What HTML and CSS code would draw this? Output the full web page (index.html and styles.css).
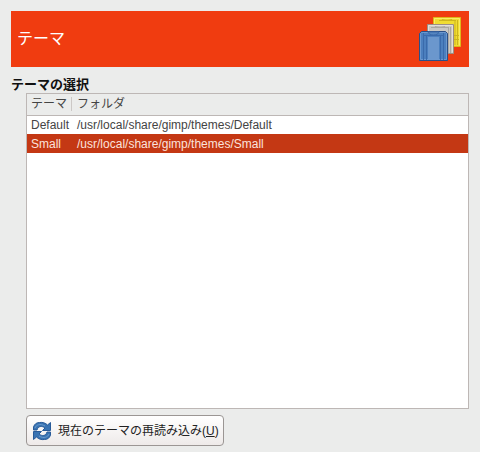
FILE: index.html
```html
<!DOCTYPE html>
<html lang="ja">
<head>
<meta charset="utf-8">
<title>テーマ</title>
<link rel="stylesheet" href="styles.css">
</head>
<body>
<main class="page">
  <header class="banner">
    <h1 class="banner-title">テーマ</h1>
    <svg class="banner-icon" width="44" height="48" viewBox="0 0 44 48" aria-hidden="true">
      <g>
        <path d="M14.500 2.500h27v29h-27z" fill="#f0dc32" stroke="#e0b818"/>
        <path d="M36 5v25M38.500 5v25M20 5.500h17M22 3c1 3 11 3 12 0M35 20.500h6M35 24.500h6" fill="none" stroke="#cdb51c"/>
        <path d="M15.500 30V3.500h25v27" fill="none" stroke="#f8ec68"/>
      </g>
      <g>
        <path d="M8.500 9.500h26v29h-26z" fill="#cbc8c3" stroke="#9c8e86"/>
        <path d="M29.500 12v26M31.500 12v26M12 12.500h17M15 10c1 3 11 3 12 0" fill="none" stroke="#aaa7a1"/>
        <path d="M9.500 37V10.500h24v27" fill="none" stroke="#e2dfda"/>
      </g>
      <g>
        <path d="M.5 18.500l2-2h24l2 2v27H.5z" fill="#4b7fbe" stroke="#2b4f87"/>
        <path d="M9 22h11v23H9z" fill="#6b97cd"/>
        <path d="M1.500 44.500V18.500l1-1h24l1 1v26z" fill="none" stroke="#6c98ce"/>
        <path d="M4.500 18v27M7.500 21v24M21.500 21v24M24.500 18v27M5 20.500h19" fill="none" stroke="#3a6aab"/>
        <path d="M9 17c1 4 10 4 11 0z" fill="#5686c0" stroke="#3a6aab"/>
      </g>
    </svg>
  </header>
  <section class="themes">
    <h2 class="themes-title" id="themes-title">テーマの選択</h2>
    <div class="themes-body">
      <div class="list">
        <table class="theme-table" aria-labelledby="themes-title">
          <thead>
            <tr><th class="name" scope="col"><span class="divided">テーマ</span></th><th scope="col">フォルダ</th></tr>
          </thead>
          <tbody>
            <tr><td>Default</td><td>/usr/local/share/gimp/themes/Default</td></tr>
            <tr class="selected" aria-selected="true"><td>Small</td><td>/usr/local/share/gimp/themes/Small</td></tr>
          </tbody>
        </table>
      </div>
      <button class="reload" type="button" accesskey="u">
        <svg width="20" height="20" viewBox="0 0 20 20" aria-hidden="true">
          <path d="M1.500 9V6c1-3 3-4.500 6-4.500 3-.5 6 .5 8 2.500l3-2.500v8h-8l2.500-2.500C10 4.500 6 5 5 9z" fill="#3973b2" stroke="#285a98"/>
          <path d="M18.500 11v3c-1 3-3 4.500-6 4.500-3 .5-6-.5-8-2.500l-3 2.500v-8h8L7 13c3 2.500 7 2 8-2z" fill="#3973b2" stroke="#285a98"/>
          <path d="M3 7c1-3 5-5 10-2M17 13c-1 3-5 5-10 2" fill="none" stroke="#6b9bcd"/>
        </svg>
        <span>現在のテーマの再読み込み(<u>U</u>)</span>
      </button>
    </div>
  </section>
</main>
</body>
</html>
```
FILE: styles.css
```css
* {
  box-sizing: border-box;
}

body {
  margin: 0;
  background: #ebeceb;
  color: #444;
  font: 12px/18px "Liberation Sans", "Noto Sans CJK JP", sans-serif;
}

.page {
  display: flex;
  flex-direction: column;
  gap: 10px;
  min-height: 100vh;
  padding: 11px 11px 6px;
}

.banner {
  display: flex;
  align-items: center;
  justify-content: space-between;
  padding: 4px 6px;
  background: #f03c10;
  color: #fff;
}

.banner-title {
  margin: 0;
  font-size: 16px;
  line-height: 24px;
  font-weight: 400;
}

.banner-icon {
  display: block;
}

.themes,
.themes-body {
  display: flex;
  flex: 1;
  flex-direction: column;
}

.themes-title {
  margin: 0;
  color: #111;
  font-size: 13px;
  line-height: 16px;
  font-weight: 700;
}

.themes-body {
  gap: 6px;
  padding-left: 15px;
}

.list {
  flex: 1;
  border: 1px solid #bdb7b5;
  background: #fff;
}

.theme-table {
  width: 100%;
  border-collapse: collapse;
}

.theme-table th,
.theme-table td {
  height: 19px;
  padding: 0 4px;
  text-align: left;
  font-weight: 400;
  white-space: nowrap;
}

.theme-table th {
  height: 21px;
  border-bottom: 1px solid #bdb7b5;
  background: #ebeceb;
}

.theme-table .name {
  width: 46px;
  padding-right: 1px;
}

.divided {
  display: block;
  border-right: 1px solid #ccc8c6;
  line-height: 14px;
}

.theme-table .selected td {
  background: #c43814;
  color: #fbe3dc;
}

.reload {
  display: flex;
  align-items: center;
  align-self: flex-start;
  gap: 6px;
  height: 31px;
  padding: 0 4px 0 5px;
  border: 1px solid #9b9694;
  border-radius: 4px;
  background: linear-gradient(#fff, #eeeae9);
  color: #222;
  font: inherit;
}
```
